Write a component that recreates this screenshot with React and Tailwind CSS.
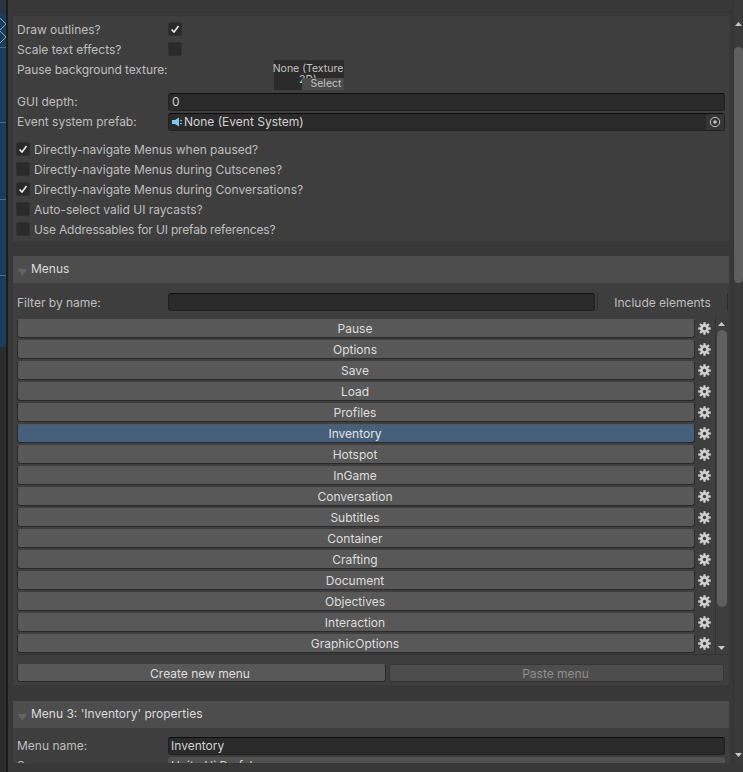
const FONT = "font-['Inter','Liberation_Sans',sans-serif]";

const menus = [
  "Pause", "Options", "Save", "Load", "Profiles", "Inventory", "Hotspot", "InGame",
  "Conversation", "Subtitles", "Container", "Crafting", "Document", "Objectives",
  "Interaction", "GraphicOptions",
];

const topChecks = [
  ["Directly-navigate Menus when paused?", true, ""],
  ["Directly-navigate Menus during Cutscenes?", false, ""],
  ["Directly-navigate Menus during Conversations?", true, ""],
  ["Auto-select valid UI raycasts?", false, ""],
  ["Use Addressables for UI prefab references?", false, "tracking-[-0.17px]"],
];

function Check({ on }) {
  return (
    <span className="-mt-[2px] flex h-[14px] w-[14px] shrink-0 items-center justify-center rounded-[2px] border border-[#303030] bg-[#2a2a2a]">
      {on && (
        <svg width="10" height="10" viewBox="0 0 10 10">
          <path d="M1.5 5.5 L4 8 L8.5 2" fill="none" stroke="#eeeeee" strokeWidth="1.5" />
        </svg>
      )}
    </span>
  );
}

function Label({ children, className = "" }) {
  return <span className={`w-[151px] shrink-0 whitespace-nowrap text-[#bebebe] ${className}`}>{children}</span>;
}

function Row({ label, children, className = "h-5" }) {
  return (
    <div className={`flex items-center pr-[4px] ${className}`}>
      <Label>{label}</Label>
      {children}
    </div>
  );
}

function Field({ children, className = "" }) {
  return (
    <div className={`flex h-[18px] items-center rounded-[3px] border border-[#212121] border-t-[#0d0d0d] bg-[#2a2a2a] px-[2px] text-[#d2d2d2] ${className}`}>
      {children}
    </div>
  );
}

function Gear() {
  const teeth = [0, 45, 90, 135];
  return (
    <svg width="13" height="13" viewBox="0 0 13 13" className="shrink-0">
      {teeth.map((a) => (
        <rect key={a} x="5.4" y="0.2" width="2.2" height="12.6" fill="#cfcfcf" transform={`rotate(${a} 6.5 6.5)`} />
      ))}
      <circle cx="6.5" cy="6.5" r="4.4" fill="#cfcfcf" />
      <circle cx="6.5" cy="6.5" r="1.7" fill="#3e3e3e" />
    </svg>
  );
}

function Arrow({ up, className = "" }) {
  return (
    <svg width="7" height="4" viewBox="0 0 7 4" className={className}>
      <path d={up ? "M0 4 L3.5 0 L7 4 Z" : "M0 0 L3.5 4 L7 0 Z"} fill="#c8c8c8" />
    </svg>
  );
}

function Header({ children }) {
  return (
    <div className="relative flex h-[27px] items-center bg-[#4d4d4d] pb-[1px] pl-[18px] text-[#dcdcdc]">
      <svg width="9" height="7" viewBox="0 0 9 7" className="absolute left-[5px] top-[13px]">
        <path d="M0 0 L9 0 L4.5 7 Z" fill="#636363" />
      </svg>
      {children}
    </div>
  );
}

function MenuRow({ name, active }) {
  return (
    <div className="flex h-[21px] items-center">
      <button
        className={`flex h-[19px] w-[678px] items-center justify-center rounded-[3px] border border-[#2a2a2a] border-t-[#585858] pr-[2px] ${
          active ? "bg-[#46607c] text-[#e4e4e4]" : "bg-[#585858] text-[#dedede]"
        }`}
      >
        {name}
      </button>
      <span className="ml-[3px]">
        <Gear />
      </span>
    </div>
  );
}

// the scene view that peeks out at the left of the inspector
function SceneStrip() {
  return (
    <div className="flex w-[8px] shrink-0 flex-col border-r-2 border-[#1c1c1c]">
      <div className="h-[14px] bg-[#283442]" />
      <div className="h-[333px] bg-[#1c3c5e]">
        <svg width="6" height="333" viewBox="0 0 6 333">
          <path d="M0 4 L6 10 L0 16 M0 17 L6 23 L0 29" fill="none" stroke="#8fa3b8" strokeWidth="1" />
          <path d="M0 33.5 H6 M0 108.5 H6 M0 185.5 H6 M0 261.5 H6" stroke="#4d6b8a" strokeWidth="1" />
        </svg>
      </div>
      <div className="flex-1 bg-[#2b2b2b]" />
    </div>
  );
}

export default function App() {
  return (
    <div className={`flex h-[772px] w-[743px] overflow-hidden bg-[#383838] text-[12px] leading-none ${FONT}`}>
      <SceneStrip />

      <div className="flex h-full w-[725px] shrink-0 flex-col pl-[5px]">
        <div className="mb-[4px] mt-[11px] h-px w-[720px] bg-[#323232]" />
        <div className="h-[225px] w-[716px] bg-[#3e3e3e] pl-[4px] pt-[4px]">
          <Row label="Draw outlines?">
            <Check on />
          </Row>
          <Row label="Scale text effects?">
            <Check />
          </Row>
          <div className="flex h-[32px] items-start">
            <Label className="pt-[4px] tracking-[-0.08px]">Pause background texture:</Label>
            <div className="relative ml-[106px] h-[30px] w-[70px] bg-[#2b2b2b] text-[10.5px] text-[#c4c4c4]">
              <div className="flex justify-center whitespace-nowrap pr-[2px] pt-[4px]">None (Texture</div>
              <div className="pl-[25px]">2D)</div>
              <div className="absolute bottom-0 right-0 flex h-[12px] w-[42px] items-center justify-center rounded-tl-[3px] bg-[#4b4b4b] pl-[6px]">
                Select
              </div>
            </div>
          </div>
          <Row label="GUI depth:">
            <Field className="w-[557px]">
              <span className="pl-px">0</span>
            </Field>
          </Row>
          <Row label="Event system prefab:">
            <Field className="w-[557px] !pr-0">
              <svg width="12" height="12" viewBox="0 0 12 12" className="shrink-0">
                <path d="M1 4 H4 L8 1.5 V10.5 L4 8 H1 Z" fill="#7fc8ea" />
                <circle cx="10" cy="4.5" r="0.8" fill="#d8d8d8" />
                <circle cx="10" cy="7.5" r="0.8" fill="#d8d8d8" />
              </svg>
              <span className="ml-[1px] flex-1">None (Event System)</span>
              <span className="flex h-full w-[18px] items-center justify-center bg-[#353535]">
                <svg width="12" height="12" viewBox="0 0 12 12">
                  <circle cx="6" cy="6" r="4.7" fill="none" stroke="#c4c4c4" strokeWidth="1" />
                  <circle cx="6" cy="6" r="1.8" fill="#c4c4c4" />
                </svg>
              </span>
            </Field>
          </Row>
          <div className="-ml-[1px] pt-[8px]">
            {topChecks.map(([text, on, extra]) => (
              <div key={text} className={`flex h-5 items-center gap-[4px] text-[#bebebe] ${extra}`}>
                <Check on={on} />
                {text}
              </div>
            ))}
          </div>
        </div>

        <div className="mt-[15px] w-[716px]">
          <Header>Menus</Header>
          <div className="h-[402px] bg-[#3e3e3e] pl-[4px]">
            <div className="flex h-[33px] items-center pt-[4px]">
              <Label className="pt-[2px]">Filter by name:</Label>
              <Field className="w-[427px]" />
              <span className="ml-[2px] h-[18px] w-px bg-[#2c2c2c]" />
              <span className="w-[129px] pl-px pr-px pt-[2px] text-center text-[#bebebe]">Include elements</span>
              <span className="h-[18px] w-px bg-[#2c2c2c]" />
            </div>
            <div className="flex h-[339px] w-[711px] border-b border-[#333333] pt-[2px]">
              <div className="w-[698px] shrink-0">
                {menus.map((name) => (
                  <MenuRow key={name} name={name} active={name === "Inventory"} />
                ))}
              </div>
              <div className="-mt-[2px] flex w-[13px] shrink-0 flex-col items-center border-l border-[#333333] pr-[1px]">
                <Arrow up className="mt-[6px]" />
                <div className="mt-[4px] h-[277px] w-[10px] rounded-[5px] bg-[#5f5f5f]" />
                <Arrow className="mt-[36px] translate-y-[3px]" />
              </div>
            </div>
            <div className="flex gap-[3px] pt-[9px]">
              <button className="flex h-[18px] w-[369px] items-center justify-center rounded-[3px] border border-[#2a2a2a] border-t-[#585858] bg-[#585858] pr-[3px] pt-[1px] text-[#dedede]">
                Create new menu
              </button>
              <button className="flex h-[18px] w-[335px] items-center justify-center rounded-[3px] border border-[#363636] bg-[#4d4d4d] pr-[2px] pt-[1px] text-[#8f8f8f]">
                Paste menu
              </button>
            </div>
          </div>
        </div>

        <div className="mt-[16px] w-[716px]">
          <Header>Menu 3: 'Inventory' properties</Header>
          <div className="h-[35px] overflow-hidden bg-[#3e3e3e] pl-[4px] pt-[8px]">
            <div className="flex h-[20px] items-center">
              <Label>Menu name:</Label>
              <Field className="w-[557px]">
                <span>Inventory</span>
              </Field>
            </div>
            <div className="mt-px flex h-[18px] items-center">
              <Label>Source:</Label>
              <div className="flex h-[18px] w-[557px] items-center rounded-[3px] bg-[#515151] px-[3px] text-[#d2d2d2]">
                Unity Ui Prefab
              </div>
            </div>
          </div>
        </div>
      </div>

      {/* inspector scrollbar */}
      <div className="flex h-[763px] w-[10px] shrink-0 flex-col items-center border-l border-[#333333] bg-[#3a3a3a]">
        <Arrow up className="mt-[22px]" />
        <div className="mt-[21px] h-[236px] w-[9px] rounded-[5px] bg-[#5f5f5f]" />
        <Arrow className="mt-[470px]" />
      </div>
    </div>
  );
}
